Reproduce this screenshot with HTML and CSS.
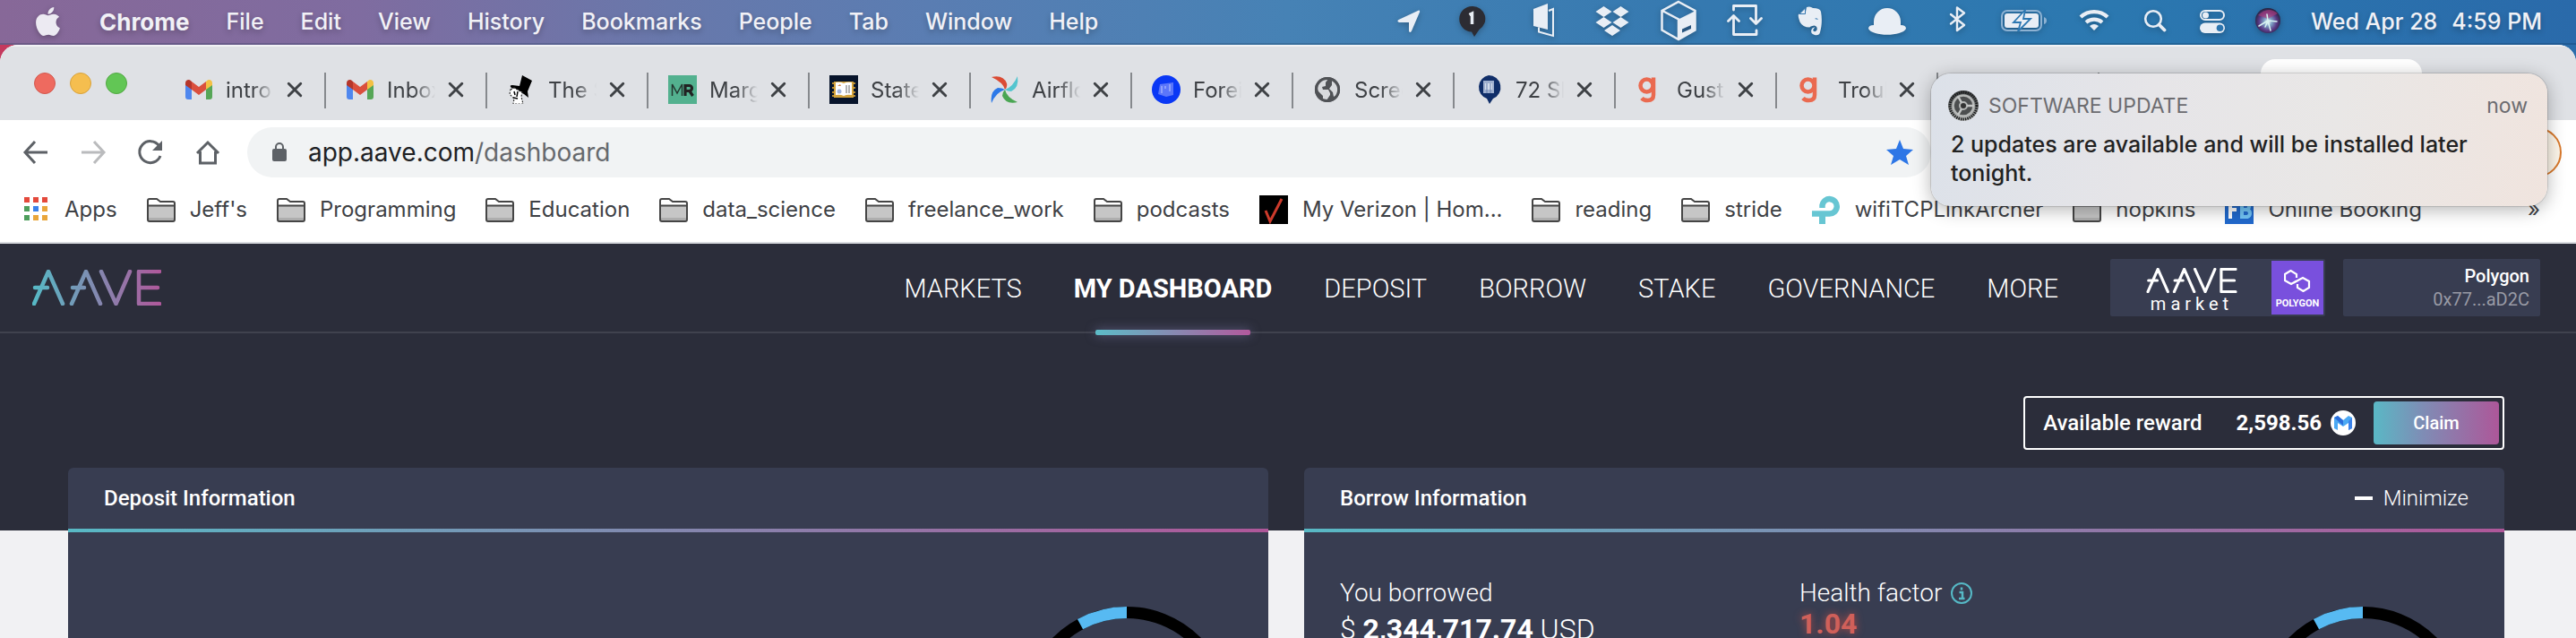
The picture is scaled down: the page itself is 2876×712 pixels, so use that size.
FILE: index.html
```html
<!DOCTYPE html>
<html lang="en">
<head>
<meta charset="utf-8">
<title>Aave - My Dashboard</title>
<link rel="stylesheet" href="styles.css">
</head>
<body>
<svg class="defs" aria-hidden="true">
  <defs>
    <linearGradient id="brand" gradientUnits="userSpaceOnUse" x1="0" y1="20" x2="144" y2="20"><stop offset="0" stop-color="#56bac6"/><stop offset="1" stop-color="#b0589b"/></linearGradient>
    <linearGradient id="steel" x1="0" y1="0" x2="0" y2="1"><stop offset="0" stop-color="#3a3d3f"/><stop offset="1" stop-color="#b9bbba"/></linearGradient>
    <radialGradient id="siri" cx=".5" cy=".55" r=".55"><stop offset="0" stop-color="#fff"/><stop offset=".3" stop-color="#7d9fc4"/><stop offset=".65" stop-color="#5b3a86"/><stop offset="1" stop-color="#22223c"/></radialGradient>
    <symbol id="folder" viewBox="0 0 32 32"><path d="M1 11V6q0-2 2-2h8l4 3h14q2 0 2 2v2z" fill="#fff"/><path d="M1 12h30v17H1z" fill="#c6c6c6"/><path d="M1 25h30v4H1z" fill="#aeaeae"/><path d="M1 27V6q0-2 2-2h8l4 3h14q2 0 2 2v18q0 2-2 2H3q-2 0-2-2zM1 11.500h30" fill="none" stroke="#454545" stroke-width="2"/></symbol>
    <symbol id="close" viewBox="0 0 16 16"><path d="M2 2l12 12M14 2L2 14" stroke="#3e4145" stroke-width="2.600" fill="none" stroke-linecap="round"/></symbol>
    <symbol id="gmail" viewBox="0 0 32 32"><path d="M1 9v15q0 3 3 3h4V14z" fill="#4f87ee"/><path d="M31 9v15q0 3-3 3h-4V14z" fill="#56a657"/><path d="M8 7l8 6 8-6v9l-8 6-8-6z" fill="#da4f3d"/><path d="M1 9q0-4 4-4 1 0 3 2v9l-7-5z" fill="#b5362b"/><path d="M31 9q0-4-4-4-1 0-3 2v9l7-5z" fill="#f3c044"/></symbol>
    <symbol id="gusto" viewBox="0 0 32 32"><circle cx="12.500" cy="11.500" r="7" fill="none" stroke="#ea6a50" stroke-width="4.500"/><path d="M20 2.500V22q0 6-6.500 6-4.500 0-6.500-2.500" fill="none" stroke="#ea6a50" stroke-width="4.500"/></symbol>
    <symbol id="aave" viewBox="0 0 144 40"><path d="M2 38L18 2l16 36M3 20h14M44 38L60 2l16 36M45 20h13M77 2l16.500 36L109 2M142 2h-23v36h23M119 20h21" fill="none" stroke-width="4.500" stroke-linecap="round" stroke-linejoin="round"/></symbol>
    <symbol id="donut" viewBox="0 0 232 232"><circle cx="116" cy="116" r="109.500" fill="none" stroke="#000" stroke-width="13"/><path d="M64 19.600A109.500 109.500 0 0 1 116 6.500" fill="none" stroke="#57baf2" stroke-width="13"/></symbol>
  </defs>
</svg>
<div class="desktop">
  <header class="menubar">
    <nav class="menubar-menus">
      <svg class="apple" viewBox="4 32 376 448"><path d="M318.700 268.700c-.2-36.700 16.400-64.400 50-84.800-18.800-26.900-47.200-41.700-84.700-44.600-35.500-2.800-74.300 20.700-88.500 20.700-15 0-49.400-19.700-76.400-19.700C63.300 141.200 4 184.800 4 273.500q0 39.300 14.400 81.200c12.800 36.700 59 126.700 107.200 125.200 25.200-.6 43-17.900 75.800-17.900 31.800 0 48.300 17.900 76.400 17.900 48.600-.7 90.400-82.500 102.600-119.300-65.200-30.700-61.700-90-61.700-91.900zm-56.600-164.200c27.300-32.400 24.800-61.900 24-72.500-24.100 1.400-52 16.400-67.900 34.900-17.500 19.800-27.800 44.300-25.600 71.900 26.100 2 49.900-11.400 69.500-34.300z" fill="#eceaf2"/></svg>
      <a class="menu menu-app" href="#">Chrome</a><a class="menu" href="#">File</a><a class="menu" href="#">Edit</a><a class="menu" href="#">View</a><a class="menu" href="#">History</a><a class="menu" href="#">Bookmarks</a><a class="menu" href="#">People</a><a class="menu" href="#">Tab</a><a class="menu" href="#">Window</a><a class="menu" href="#">Help</a>
    </nav>
    <div class="menubar-status">
      <svg width="68" height="50" viewBox="1540 0 68 50"><path d="M1584 12.500q1.500 0 1 2l-9 21q-2 3-3 0v-9.500h-11q-3-1-.5-3z" fill="#e9eef5"/></svg>
      <svg width="76" height="50" viewBox="1608 0 76 50"><path d="M1644 8a14 14 0 0 1 7.500 26L1646 42l-3-5.500A14 14 0 0 1 1644 8z" fill="#2c2c33"/><path d="M1640.500 17.500l3-1.500v12" fill="none" stroke="#e9eef5" stroke-width="3.500"/></svg>
      <svg width="76" height="50" viewBox="1684 0 76 50"><path d="M1712 11l16-6v29l-16-4z" fill="#e9eef5"/><path d="M1729 13l5-2v30l-16-4.500v-5" fill="none" stroke="#e9eef5" stroke-width="2"/></svg>
      <svg width="78" height="50" viewBox="1760 0 78 50"><path d="M1790.500 8l9 6-9 6-9-6zM1809.500 8l9 6-9 6-9-6zM1790.500 20l9 6-9 6-9-6zM1809.500 20l9 6-9 6-9-6zM1800 29l9 6-9 6-9-6z" fill="#e9eef5"/></svg>
      <svg width="74" height="50" viewBox="1838 0 74 50"><path d="M1874 3l18.500 10v21.500L1874 45l-18.500-10.500V13zM1856 13l18 9.500V44" fill="none" stroke="#e9eef5" stroke-width="2.500"/><path d="M1874 22.500l19-9.500v21.500L1874 45z" fill="#e9eef5"/><path d="M1878 33.500l10-4.500v4l-10 4.500z" fill="#28557f"/></svg>
      <svg width="76" height="50" viewBox="1912 0 76 50"><path d="M1935.500 12V7.500h25V27M1961 35v4.500h-25.500V20M1929.500 24.500l6-6 6 6M1954.500 21.500l6 6 6-6" fill="none" stroke="#e9eef5" stroke-width="2.800" stroke-linecap="round" stroke-linejoin="round"/></svg>
      <svg width="68" height="50" viewBox="1988 0 68 50"><path d="M2017 9q4-1.500 7 1 8 0 9 4c1.500 8 1 16-1 23q-1 4-6 3-5-1-3.500-6 1-3 4-2.500-3 2-2 4 2 2 4-1 1-4-3-5-5 1-5 2-8 0-11-6-3-8-1-9h7z" fill="#e9eef5"/><path d="M2015.500 10v6.500h-6.500z" fill="#e9eef5" stroke="#3477b0"/><path d="M2026 22q2.500-2 4 1z" fill="#3477b0"/></svg>
      <svg width="92" height="50" viewBox="2056 0 92 50"><path d="M2092 29v-4a15 15 0 0 1 30 0v4q6 0 6 4c-4 9-38 9-42 0q0-4 6-4z" fill="#e9eef5"/></svg>
      <svg width="68" height="50" viewBox="2148 0 68 50"><path d="M2178 17l15 12-8 6V9.500l8 6-15 12" fill="none" stroke="#e9eef5" stroke-width="2.400" stroke-linejoin="round" stroke-linecap="round"/></svg>
      <svg width="84" height="50" viewBox="2216 0 84 50"><rect x="2235" y="13" width="44" height="22" rx="6" fill="none" stroke="#8db2d3" stroke-width="2"/><path d="M2282 20q3 1 3 4t-3 4z" fill="#8db2d3"/><rect x="2238" y="16" width="38" height="16" rx="3" fill="#e9eef5"/><path d="M2261 12l-13 14h8l-3 10 14-14h-8z" fill="#e9eef5" stroke="#2c77b1" stroke-width="1.800"/></svg>
      <svg width="72" height="50" viewBox="2300 0 72 50"><path d="M2323 20a22 22 0 0 1 30 0M2329 26a14 14 0 0 1 18 0" fill="none" stroke="#e9eef5" stroke-width="4.200"/><path d="M2333 30q5-4 10 0l-5 5z" fill="#e9eef5"/></svg>
      <svg width="64" height="50" viewBox="2372 0 64 50"><circle cx="2404" cy="22" r="8.800" fill="none" stroke="#e9eef5" stroke-width="2.600"/><path d="M2410.500 28.500l6 6" stroke="#e9eef5" stroke-width="3.800" stroke-linecap="round"/></svg>
      <svg width="64" height="50" viewBox="2436 0 64 50"><rect x="2457" y="13" width="26" height="10" rx="5" fill="none" stroke="#e9eef5" stroke-width="2"/><circle cx="2462.500" cy="18" r="3.500" fill="#e9eef5"/><rect x="2456" y="26.500" width="28" height="11.500" rx="5.700" fill="#e9eef5"/><circle cx="2478.500" cy="32.200" r="3.800" fill="#2c74ae"/></svg>
      <svg width="60" height="50" viewBox="2500 0 60 50"><circle cx="2532" cy="24" r="14" fill="url(#siri)"/><path d="M2521 18q11-11 22-2l-11 6z" fill="#b03b78" opacity=".6"/><path d="M2532 24l-10 6M2532 24l3 11M2532 24l10 1M2532 24l-1-7M2532 24l-3 7" stroke="#d8f4f2" stroke-width="1.500" stroke-linecap="round"/></svg>
      <span class="clock"><span>Wed Apr 28</span><span>4:59 PM</span></span>
    </div>
  </header>

  <div class="browser">
    <div class="tabstrip">
      <div class="lights"><button class="light light-red" aria-label="Close window"></button><button class="light light-yellow" aria-label="Minimize window"></button><button class="light light-green" aria-label="Zoom window"></button></div>
      <div class="tab"><svg class="favicon"><use href="#gmail"/></svg><span class="tab-title">intro</span><button class="tab-close" aria-label="Close tab"><svg><use href="#close"/></svg></button></div>
      <div class="tab"><svg class="favicon"><use href="#gmail"/></svg><span class="tab-title">Inbox</span><button class="tab-close" aria-label="Close tab"><svg><use href="#close"/></svg></button></div>
      <div class="tab"><svg class="favicon" viewBox="0 0 32 32"><path d="M17 0l11 6-5 12 1 7-5-4-14-7q-3-3 1-3l8 1z" fill="#000"/><path d="M4 16l4-2 9 5-1 5 2 8H7l1-6-5-5z" fill="#fff" stroke="#333" stroke-width="1.200" stroke-dasharray="2 1.500"/><path d="M8 18l1 4M12 18l-1 6M7 25l5 1" stroke="#000" stroke-width="1.500"/></svg><span class="tab-title">The S</span><button class="tab-close" aria-label="Close tab"><svg><use href="#close"/></svg></button></div>
      <div class="tab"><svg class="favicon" viewBox="0 0 32 32"><path d="M0 0h32v32H0z" fill="#53b18f"/><path d="M4.500 23V10L10 20l5.500-10v13" fill="none" stroke="#24362f" stroke-width="1.500"/><path d="M19 23V11.500h4.500a3 3 0 0 1 0 6H19M23.500 17l4 6" fill="none" stroke="#222" stroke-width="3.200"/></svg><span class="tab-title">Margin</span><button class="tab-close" aria-label="Close tab"><svg><use href="#close"/></svg></button></div>
      <div class="tab"><svg class="favicon" viewBox="0 0 32 32"><path d="M0 0h32v32H0z" fill="#07142b"/><path d="M3 9h26M3 14h26M3 19h26M3 23h26" stroke="#b98c2f" stroke-width="2"/><path d="M5 7h22v18H5z" fill="#d3a33c"/><path d="M7 8q5-1 9 1 4-2 9-1v14q-5-1-9 1-4-2-9-1z" fill="#fff"/><path d="M19 11v9M22 11v9" stroke="#999" stroke-width="1.500"/><circle cx="11" cy="18" r="2.500" fill="#a5b6dc"/><path d="M9 12l3-2 1 2z" fill="#d98a4c"/></svg><span class="tab-title">State</span><button class="tab-close" aria-label="Close tab"><svg><use href="#close"/></svg></button></div>
      <div class="tab"><svg class="favicon" viewBox="0 0 32 32"><path d="M1 2q13-3 17 7 1 4-2 7-2-8-15-14z" fill="#db4b34"/><path d="M30 1q2 13-7 17-4 0-7-2 9-3 14-15z" fill="#54c5cf"/><path d="M30 30q-13 3-17-7 0-4 3-7 2 9 14 14z" fill="#4aa653"/><path d="M1 31Q-1 18 8 14q5 0 8 2Q6 19 1 31z" fill="#2d79e8"/></svg><span class="tab-title">Airflow</span><button class="tab-close" aria-label="Close tab"><svg><use href="#close"/></svg></button></div>
      <div class="tab"><svg class="favicon" viewBox="0 0 32 32"><circle cx="16" cy="16" r="16" fill="#0a38f5"/><path d="M9 10l15-2v14l-8 2-9-3z" fill="#5b76fa"/><path d="M11 12v8M15 12v3M20 10v8" stroke="#8da0fc" stroke-width="2"/></svg><span class="tab-title">Foreign</span><button class="tab-close" aria-label="Close tab"><svg><use href="#close"/></svg></button></div>
      <div class="tab"><svg class="favicon" viewBox="0 0 32 32"><circle cx="16" cy="16" r="14" fill="#505256"/><path d="M7 8q5-5 10-4l-3 4v4l-4 1 1 3h6l2 4v2l-4 6-4-1v-4l-5-5q-2-5 1-10zM21 6q6 4 7 9l-1 7-4 2-1-5-4-4 3-4z" fill="#dfe1e5" opacity=".95"/><circle cx="16" cy="16" r="12.600" fill="none" stroke="#505256" stroke-width="3"/></svg><span class="tab-title">Screen</span><button class="tab-close" aria-label="Close tab"><svg><use href="#close"/></svg></button></div>
      <div class="tab"><svg class="favicon" viewBox="0 0 32 32"><path d="M16 0a13.500 13.500 0 0 1 5 26l-4 6-3-6A13.500 13.500 0 0 1 16 0z" fill="#102e69"/><path d="M10 6h12v14H10z" fill="#9fb0cf"/><path d="M12 9h8v7h-8z" fill="#d5deec"/><path d="M14 9v11M18 9v11" stroke="#6a82b0"/></svg><span class="tab-title">72 Slides</span><button class="tab-close" aria-label="Close tab"><svg><use href="#close"/></svg></button></div>
      <div class="tab"><svg class="favicon"><use href="#gusto"/></svg><span class="tab-title">Gusto</span><button class="tab-close" aria-label="Close tab"><svg><use href="#close"/></svg></button></div>
      <div class="tab"><svg class="favicon"><use href="#gusto"/></svg><span class="tab-title">Trouble</span><button class="tab-close" aria-label="Close tab"><svg><use href="#close"/></svg></button></div>
      <div class="tab"></div>
      <div class="tab tab-last"></div>
      <div class="tab tab-active"></div>
    </div>

    <div class="toolbar">
      <button class="tool" aria-label="Back"><svg viewBox="0 0 32 32"><path d="M29 16H4M15 4L4 16l11 12" fill="none" stroke="#5d6166" stroke-width="3"/></svg></button>
      <button class="tool" aria-label="Forward"><svg viewBox="0 0 32 32"><path d="M3 16h25M17 4l11 12-11 12" fill="none" stroke="#babbbd" stroke-width="3"/></svg></button>
      <button class="tool" aria-label="Reload"><svg viewBox="0 0 32 32"><path d="M25.500 8.500A12 12 0 1 0 27 20" fill="none" stroke="#5d6166" stroke-width="3"/><path d="M29 3v11H18z" fill="#5d6166"/></svg></button>
      <button class="tool" aria-label="Home"><svg viewBox="0 0 32 32"><path d="M4 17L16 5l12 12M7.500 15v13h17V15" fill="none" stroke="#5d6166" stroke-width="3"/></svg></button>
      <div class="omnibox">
        <svg class="lock" viewBox="0 0 16 24"><rect y="8" width="16" height="14" rx="2" fill="#5d6166"/><path d="M4 9V6a4 4 0 0 1 8 0v3" fill="none" stroke="#5d6166" stroke-width="2"/></svg>
        <div class="url" role="textbox" aria-label="Address" contenteditable="true">app.aave.com<span class="url-path">/dashboard</span></div>
        <button class="star" aria-label="Edit bookmark"><svg viewBox="0 0 30 28"><path d="M15 0l4 10 11 1-8 7 3 10-10-6-10 6 3-10-8-7 11-1z" fill="#2d76e6"/></svg></button>
      </div>
      <button class="profile" aria-label="Update"></button>
    </div>

    <nav class="bookmarks">
      <a class="bookmark" href="#"><svg viewBox="0 0 32 32"><path d="M3 2h6v6H3zM13 2h6v6h-6zM23 2h6v6h-6z" fill="#e4493b"/><path d="M3 12h6v6H3zM3 22h6v6H3z" fill="#4e9e5c"/><path d="M13 12h6v6h-6z" fill="#3c82ea"/><path d="M23 12h6v6h-6zM13 22h6v6h-6zM23 22h6v6h-6z" fill="#e9a63b"/></svg>Apps</a>
      <a class="bookmark" href="#"><svg><use href="#folder"/></svg>Jeff's</a>
      <a class="bookmark" href="#"><svg><use href="#folder"/></svg>Programming</a>
      <a class="bookmark" href="#"><svg><use href="#folder"/></svg>Education</a>
      <a class="bookmark" href="#"><svg><use href="#folder"/></svg>data_science</a>
      <a class="bookmark" href="#"><svg><use href="#folder"/></svg>freelance_work</a>
      <a class="bookmark" href="#"><svg><use href="#folder"/></svg>podcasts</a>
      <a class="bookmark" href="#"><svg viewBox="0 0 32 32"><path d="M0 0h32v32H0z"/><path d="M7 17l5 12L25 4" fill="none" stroke="#cc3a2b" stroke-width="3"/></svg>My Verizon | Hom...</a>
      <a class="bookmark" href="#"><svg><use href="#folder"/></svg>reading</a>
      <a class="bookmark" href="#"><svg><use href="#folder"/></svg>stride</a>
      <a class="bookmark" href="#"><svg viewBox="0 0 32 32"><path d="M11.500 14v-3a8.200 8.200 0 1 1 8 9.500H0" fill="none" stroke="#67c6d3" stroke-width="6.500"/><path d="M8 19h7v13H8z" fill="#67c6d3"/></svg>wifiTCPLinkArcher</a>
      <a class="bookmark" href="#"><svg><use href="#folder"/></svg>hopkins</a>
      <a class="bookmark" href="#"><svg viewBox="0 0 32 32"><path d="M0 0h32v32H0z" fill="#2169cc"/><path d="M6 26V8h8M6 16h7" fill="none" stroke="#fff" stroke-width="4"/><path d="M19 7v17h6q3-1 3-4t-3-4h-6 6q2-1 2-4t-3-4h-5" fill="none" stroke="#74c6f7" stroke-width="4"/></svg>Online Booking</a>
      <button class="more" aria-label="More bookmarks">»</button>
    </nav>

    <main class="app">
      <header class="app-header">
        <a href="#" aria-label="Aave"><svg class="logo" stroke="url(#brand)"><use href="#aave"/></svg></a>
        <nav class="app-nav">
          <a class="nav-link" href="#">MARKETS</a>
          <a class="nav-link nav-active" href="#">MY DASHBOARD</a>
          <a class="nav-link" href="#">DEPOSIT</a>
          <a class="nav-link" href="#">BORROW</a>
          <a class="nav-link" href="#">STAKE</a>
          <a class="nav-link" href="#">GOVERNANCE</a>
          <a class="nav-link" href="#">MORE</a>
        </nav>
        <button class="market">
          <span class="market-name"><svg class="market-logo" stroke="#fff"><use href="#aave"/></svg><span class="market-label">market</span></span>
          <span class="market-chain"><svg viewBox="0 0 30 25"><path d="M14 12.500l-6 3.500-7-4V5l6.500-4L14 5v4M14.500 12.500L21 9l7 4v7l-6.500 4-6.500-4v-4M11 14.500l8-4.500" fill="none" stroke="#fff" stroke-width="2.200"/></svg>POLYGON</span>
        </button>
        <button class="wallet"><span>Polygon</span><span class="wallet-address">0x77...aD2C</span></button>
      </header>

      <div class="content">
        <section class="reward">
          <span>Available reward</span>
          <strong class="reward-amount">2,598.56</strong>
          <svg class="token" viewBox="0 0 28 28"><circle cx="14" cy="14" r="14" fill="#fff"/><path d="M4 8l4-2 6 5 6-5 4 2v12l-4 2v-8l-6 4-6-4v8l-4-2z" fill="#4ba9f4"/><path d="M4 8l4-2 6 5v6z" fill="#2b6ddb"/><path d="M24 8v12l-4 2V12z" fill="#3b82ea"/></svg>
          <button class="claim">Claim</button>
        </section>
        <div class="cards">
          <section class="card">
            <div class="card-head"><h2 class="card-title">Deposit Information</h2></div>
            <div class="card-body"><div class="metrics"></div><svg class="donut"><use href="#donut"/></svg></div>
          </section>
          <section class="card">
            <div class="card-head"><h2 class="card-title">Borrow Information</h2><button class="minimize">Minimize</button></div>
            <div class="card-body">
              <div class="metrics">
                <div class="metric"><p class="metric-label">You borrowed</p><p class="amount">$ <b>2,344,717.74</b> USD</p></div>
                <div class="metric"><p class="metric-label">Health factor <svg class="info" viewBox="0 0 24 24"><circle cx="12" cy="12" r="11" fill="none" stroke="#56b9c6" stroke-width="2"/><path d="M12 5.500v3M9.500 11H13v7M9 18h6.500" fill="none" stroke="#56b9c6" stroke-width="2.500"/></svg></p><p class="health">1.04</p></div>
              </div>
              <svg class="donut"><use href="#donut"/></svg>
            </div>
          </section>
        </div>
      </div>
    </main>
  </div>

  <aside class="notification">
    <div class="note-head">
      <svg class="gear" viewBox="0 0 36 36"><circle cx="18" cy="18" r="17" fill="url(#steel)"/><circle cx="18" cy="18" r="15" fill="none" stroke="#1c1d1e" stroke-width="3" stroke-dasharray="1.500 1"/><circle cx="18" cy="18" r="11.500" fill="#4c4e4f" stroke="#b5b7b6" stroke-width="2.500"/><circle cx="18" cy="18" r="4" fill="#333" stroke="#b5b7b6" stroke-width="2"/><path d="M22 18h8M16 14.500L12 7.500M16 21.500l-4 7" stroke="#c5c7c6" stroke-width="2.500"/></svg>
      <span>SOFTWARE UPDATE</span><time class="note-time">now</time>
    </div>
    <p class="note-text">2 updates are available and will be installed later tonight.</p>
  </aside>
</div>
</body>
</html>
```
FILE: styles.css
```css
* { box-sizing: border-box; }
body { margin: 0; font-family: Inter, "Open Sans", sans-serif; }
a { color: inherit; text-decoration: none; }
button { font: inherit; color: inherit; background: none; border: 0; padding: 0; }
p, h2 { margin: 0; }
b { font-weight: 700; }
svg { flex: none; }
.defs { position: absolute; width: 0; height: 0; }

.desktop { position: relative; display: flex; flex-direction: column; height: 100vh; overflow: hidden; background: linear-gradient(90deg, #c43a5e 0, #c02a4e 580px, #3f92c0 584px, #2b6dab 100%); }

/* macOS menu bar */
.menubar { display: flex; justify-content: space-between; align-items: center; height: 50px; flex: none; padding: 0 38px 0 40px; font-size: 25px; font-weight: 500; color: #f1f1f6; background: linear-gradient(90deg, #876898 0, #7f6ca0 14%, #6878ab 26%, #5a7db2 36%, #4682b5 50%, #3579b0 66%, #2b78b0 82%, #2a6aaa 100%); border-bottom: 2px solid rgba(0, 30, 60, .2); white-space: nowrap; text-shadow: 0 3px 6px rgba(0, 0, 0, .25); }
.menubar-menus { display: flex; align-items: center; gap: 41px; }
.apple { width: 27px; height: 32px; margin-right: 3px; filter: drop-shadow(0 2px 3px rgba(0, 0, 0, .25)); }
.menu-app { font-size: 26px; font-weight: 700; }
.menubar-status { display: flex; align-items: center; }
.menubar-status svg { filter: drop-shadow(0 2px 3px rgba(0, 0, 0, .25)); }
.clock { display: flex; gap: 16px; margin-left: 20px; }

/* Browser chrome */
.browser { flex: 1; display: flex; flex-direction: column; min-height: 0; background: #fff; border-radius: 20px 20px 0 0; overflow: hidden; }
.tabstrip { display: flex; align-items: flex-start; flex: none; height: 84px; padding-top: 14px; background: #dfe1e5; border-top: 2px solid #f1f2f5; }
.lights { display: flex; gap: 16px; width: 184px; padding: 15px 0 0 38px; flex: none; }
.light { width: 24px; height: 24px; border-radius: 50%; border: 1px solid; }
.light-red { background: #ee6a5f; border-color: #d3584e; }
.light-yellow { background: #f5be4f; border-color: #d8a23c; }
.light-green { background: #62c655; border-color: #52a843; }
.tab { position: relative; display: flex; align-items: center; flex: none; width: 180px; height: 68px; padding-left: 22px; font-size: 24px; color: #3e4145; }
.tab::after { content: ""; position: absolute; right: 0; top: 15px; width: 2px; height: 40px; background: #86898d; }
.tab-last::after, .tab-active::after { display: none; }
.tab-active { background: #fff; border-radius: 16px 16px 0 0; }
.favicon { width: 32px; height: 32px; }
.tab-title { width: 54px; margin: 0 14px; overflow: hidden; white-space: nowrap; mask-image: linear-gradient(90deg, #000 55%, transparent 100%); }
.tab-close { display: flex; }
.tab-close svg { width: 18px; height: 18px; }

.toolbar { display: flex; align-items: center; flex: none; height: 72px; padding: 0 16px 0 24px; }
.tool { display: flex; width: 32px; height: 32px; margin-right: 32px; }
.omnibox { display: flex; align-items: center; flex: 1; height: 56px; padding: 0 20px 0 28px; margin-left: -4px; border-radius: 28px; background: #f1f3f4; }
.lock { width: 16px; height: 24px; }
.url { flex: 1; margin-left: 24px; font-size: 28px; color: #202124; outline: 0; }
.url-path { color: #66696d; }
.star { display: flex; width: 30px; height: 28px; }
.profile { width: 640px; height: 56px; margin-left: 64px; border: 2px solid #d9792c; border-radius: 28px; background: #fdf6ea; }

.bookmarks { display: flex; align-items: center; flex: none; gap: 33px; height: 66px; padding: 0 40px 8px 24px; font-size: 24px; line-height: 32px; color: #3e4145; white-space: nowrap; border-bottom: 2px solid #dadce0; }
.bookmark { display: flex; align-items: center; gap: 16px; }
.bookmark svg { width: 32px; height: 32px; }
.more { margin-left: auto; }

/* Aave app */
.app { flex: 1; min-height: 0; font-family: Roboto, sans-serif; color: #fff; background: linear-gradient(#2b2d3a 320px, #f1f1f3 320px); }
.app-header { display: flex; align-items: center; height: 100px; padding: 0 40px 0 36px; border-bottom: 2px solid #40424e; }
.logo { display: block; width: 144px; height: 40px; }
.app-nav { display: flex; align-self: stretch; gap: 58px; margin: 0 58px 0 auto; font-size: 29px; font-weight: 300; }
.nav-link { position: relative; display: flex; align-items: center; padding-top: 2px; }
.nav-active { font-weight: 700; }
.nav-active::after { content: ""; position: absolute; bottom: -4px; left: 24px; right: 24px; height: 6px; border-radius: 2px; background: linear-gradient(90deg, #5cbcc8, #b2599d); box-shadow: 0 0 12px rgba(130, 130, 180, .6); }
.market { display: flex; width: 240px; height: 64px; padding: 2px; background: #383d51; border-radius: 2px; }
.market-name { flex: 1; display: flex; flex-direction: column; align-items: center; padding-top: 8px; }
.market-logo { width: 102px; height: 28px; }
.market-label { font-size: 20px; line-height: 24px; font-weight: 400; letter-spacing: 5px; }
.market-chain { display: flex; flex-direction: column; align-items: center; justify-content: space-between; width: 58px; padding: 10px 0 6px; background: #7950dd; font-size: 11px; line-height: 12px; font-weight: 700; }
.market-chain svg { width: 30px; height: 25px; }
.wallet { display: flex; flex-direction: column; align-items: flex-end; justify-content: center; width: 220px; height: 64px; margin-left: 20px; padding-right: 12px; background: #383d51; border-radius: 2px; font-size: 20px; line-height: 26px; font-weight: 500; }
.wallet-address { color: #989aa5; font-weight: 400; }

.content { padding: 70px 80px 0 76px; }
.reward { display: flex; align-items: center; width: fit-content; height: 60px; margin: 0 0 20px auto; padding: 0 4px 0 20px; border: 2px solid #fff; border-radius: 4px; font-size: 24px; font-weight: 500; }
.reward-amount { margin: 0 10px 0 38px; font-weight: 700; }
.token { width: 28px; height: 28px; margin-right: 20px; }
.claim { width: 140px; height: 48px; border-radius: 4px; background: linear-gradient(90deg, #5ab8c5, #7f8cb5 40%, #ad5799); font-size: 20px; }
.cards { display: grid; grid-template-columns: 1fr 1fr; gap: 40px; }
.card { background: #383d51; border-radius: 6px 6px 0 0; }
.card-head { display: flex; align-items: center; justify-content: space-between; height: 72px; padding: 0 40px; border-bottom: 4px solid; border-image: linear-gradient(90deg, #58b9c5, #af5799) 1; }
.card-title { font-size: 24px; font-weight: 500; }
.minimize { display: flex; align-items: center; gap: 12px; font-size: 24px; font-weight: 300; }
.minimize::before { content: ""; width: 20px; height: 4px; background: #fff; }
.card-body { display: flex; padding: 52px 42px 40px 40px; }
.metrics { flex: 1; display: grid; grid-template-columns: 1fr 1fr; }
.metric-label { display: flex; align-items: center; gap: 10px; font-size: 28px; line-height: 32px; font-weight: 300; }
.info { width: 24px; height: 24px; }
.amount { font-size: 32px; line-height: 48px; font-weight: 300; }
.health { font-size: 32px; line-height: 36px; font-weight: 700; color: #d0605a; text-shadow: 0 0 10px rgba(208, 80, 70, .8); }
.donut { width: 232px; height: 232px; margin-top: 31px; }

/* Notification */
.notification { position: absolute; top: 82px; right: 32px; width: 688px; height: 148px; padding: 18px 22px 0 18px; border-radius: 22px; background: linear-gradient(100deg, #dce1e9 0, #e6e5e8 35%, #e9e7e6 65%, #f0e4de 100%); box-shadow: 0 0 0 1px rgba(0, 0, 0, .12), 0 4px 20px rgba(0, 0, 0, .3); }
.note-head { display: flex; align-items: center; gap: 10px; height: 36px; font-size: 23px; color: #6c6c70; }
.gear { width: 36px; height: 36px; }
.note-time { margin-left: auto; }
.note-text { margin: 9px 0 0 4px; font-size: 25px; line-height: 32px; font-weight: 500; color: #222; }
```
